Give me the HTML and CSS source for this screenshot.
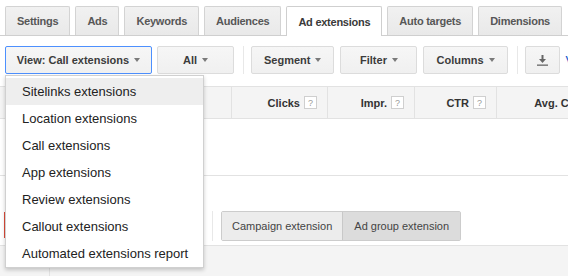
FILE: index.html
```html
<!DOCTYPE html>
<html>
<head>
<meta charset="utf-8">
<link rel="stylesheet" href="styles.css">
</head>
<body>
<div class="page">
  <div class="tabs">
    <div class="tab">Settings</div>
    <div class="tab">Ads</div>
    <div class="tab">Keywords</div>
    <div class="tab">Audiences</div>
    <div class="tab tab-active">Ad extensions</div>
    <div class="tab">Auto targets</div>
    <div class="tab">Dimensions</div>
  </div>

  <div class="toolbar">
    <div class="btn btn-focus">View: Call extensions <span class="caret"></span></div>
    <div class="btn btn-wide">All <span class="caret"></span></div>
    <div class="sep"></div>
    <div class="btn">Segment <span class="caret"></span></div>
    <div class="btn btn-wide">Filter <span class="caret"></span></div>
    <div class="btn">Columns <span class="caret"></span></div>
    <div class="sep"></div>
    <div class="btn btn-icon">
      <svg width="11" height="11" viewBox="0 0 11 11"><path d="M4.5 0h2v4h2.5l-3.5 4-3.5-4h2.5z" fill="#666"/><rect x="0" y="9.5" width="11" height="1.3" fill="#666"/></svg>
    </div>
    <a class="link">View change history</a>
  </div>

  <div class="grid-head">
    <div class="hcell"></div>
    <div class="hcell">Clicks <span class="help">?</span></div>
    <div class="hcell">Impr. <span class="help">?</span></div>
    <div class="hcell">CTR <span class="help">?</span></div>
    <div class="hcell">Avg. CPC <span class="help">?</span></div>
  </div>

  <div class="grid-body"></div>

  <div class="level-row">
    <div class="red-bar"></div>
    <div class="vsep"></div>
    <div class="segmented">
      <div class="seg">Campaign extension</div>
      <div class="seg seg-on">Ad group extension</div>
    </div>
  </div>

  <div class="footer">
    <div class="fcell"></div>
  </div>

  <ul class="menu">
    <li class="item item-hover">Sitelinks extensions</li>
    <li class="item">Location extensions</li>
    <li class="item">Call extensions</li>
    <li class="item">App extensions</li>
    <li class="item">Review extensions</li>
    <li class="item">Callout extensions</li>
    <li class="item">Automated extensions report</li>
  </ul>
</div>
</body>
</html>
```

FILE: styles.css
```css
html, body {
  margin: 0;
  padding: 0;
  background: #fff;
  overflow: hidden;
}
body {
  width: 568px;
  height: 276px;
  font-family: "Liberation Sans", Arial, sans-serif;
}
.page {
  position: relative;
  width: 568px;
  height: 276px;
  overflow: hidden;
}

/* Tabs */
.tabs {
  display: flex;
  align-items: flex-end;
  gap: 5px;
  padding: 6px 0 0 5px;
  border-bottom: 1px solid #cfcfcf;
  height: 29px;
}
.tab {
  flex-shrink: 0;
  box-sizing: border-box;
  height: 29px;
  padding: 0 11px;
  display: flex;
  align-items: center;
  border: 1px solid #d3d3d3;
  border-bottom: none;
  border-radius: 2px 2px 0 0;
  background: linear-gradient(#f1f1f1, #e9e9e9);
  font-size: 11px;
  font-weight: bold;
  letter-spacing: -0.25px;
  color: #575757;
  white-space: nowrap;
}
.tab-active {
  height: 30px;
  margin-bottom: -1px;
  background: #fff;
  border-color: #cfcfcf;
  color: #3a3a3a;
}

/* Toolbar */
.toolbar {
  display: flex;
  align-items: center;
  margin-top: 10px;
  padding-left: 5px;
  height: 28px;
  white-space: nowrap;
}
.btn {
  flex-shrink: 0;
  box-sizing: border-box;
  height: 28px;
  padding: 0 12px;
  display: flex;
  align-items: center;
  justify-content: center;
  gap: 5px;
  border: 1px solid #dcdcdc;
  border-radius: 2px;
  background: linear-gradient(#f6f6f6, #f0f0f0);
  font-size: 11px;
  font-weight: bold;
  color: #3c3c3c;
  margin-right: 6px;
}
.btn-focus {
  border-color: #4d90fe;
  width: 147px;
  margin-right: 5px;
}
.btn-wide {
  min-width: 77px;
}
.btn-icon {
  width: 35px;
  padding: 0;
  margin-right: 6px;
}
.caret {
  width: 0;
  height: 0;
  border-left: 3.5px solid transparent;
  border-right: 3.5px solid transparent;
  border-top: 4px solid #7a7a7a;
}
.sep {
  flex-shrink: 0;
  width: 1px;
  height: 28px;
  background: #e8e8e8;
  margin: 0 7px 0 3px;
}
.link {
  flex-shrink: 0;
  color: #1155cc;
  font-size: 13px;
}

/* Grid header */
.grid-head {
  display: grid;
  grid-template-columns: 231px 96px 87px 82px 115px;
  margin-top: 12px;
  height: 31px;
  background: #f4f4f4;
  border-top: 1px solid #e2e2e2;
  border-bottom: 1px solid #e2e2e2;
}
.hcell {
  display: flex;
  align-items: center;
  justify-content: flex-end;
  gap: 4px;
  padding-right: 10px;
  border-left: 1px solid #e2e2e2;
  font-size: 11px;
  font-weight: bold;
  color: #333;
  white-space: nowrap;
}
.hcell:first-child {
  border-left: none;
}
.help {
  box-sizing: border-box;
  width: 13px;
  height: 13px;
  border: 1px solid #cfcfcf;
  background: #fff;
  color: #9a9a9a;
  font-size: 9px;
  font-weight: normal;
  display: flex;
  align-items: center;
  justify-content: center;
}

.grid-body {
  height: 56px;
  border-bottom: 1px solid #e2e2e2;
}

/* Level row */
.level-row {
  box-sizing: border-box;
  height: 70px;
  display: flex;
  align-items: flex-start;
  border-bottom: 1px solid #e2e2e2;
}
.red-bar {
  width: 2px;
  height: 26px;
  margin: 36px 0 0 4px;
  background: #dd4b39;
}
.vsep {
  width: 1px;
  height: 30px;
  margin: 35px 0 0 206px;
  background: #e8e8e8;
}
.segmented {
  display: flex;
  margin: 35px 0 0 8px;
  height: 30px;
  box-sizing: border-box;
  border: 1px solid #cccccc;
  border-radius: 2px;
}
.seg {
  display: flex;
  align-items: center;
  padding: 0 10px;
  font-size: 11px;
  color: #444;
  background: #ececec;
  white-space: nowrap;
}
.seg-on {
  border-left: 1px solid #c8c8c8;
  background: #dcdcdc;
  padding: 0 11px;
}

/* Footer */
.footer {
  display: flex;
  height: 31px;
  background: #f4f4f4;
}
.fcell {
  width: 49px;
  border-right: 1px solid #e2e2e2;
}

/* Dropdown menu */
.menu {
  position: absolute;
  left: 5px;
  top: 75px;
  width: 199px;
  box-sizing: border-box;
  margin: 0;
  padding: 2px 0 0;
  list-style: none;
  background: #fff;
  border: 1px solid #d0d0d0;
  box-shadow: 0 2px 4px rgba(0, 0, 0, 0.2);
}
.item {
  height: 27px;
  line-height: 27px;
  padding-left: 16px;
  font-size: 13px;
  color: #222;
  white-space: nowrap;
}
.item-hover {
  background: #eeeeee;
}
```
